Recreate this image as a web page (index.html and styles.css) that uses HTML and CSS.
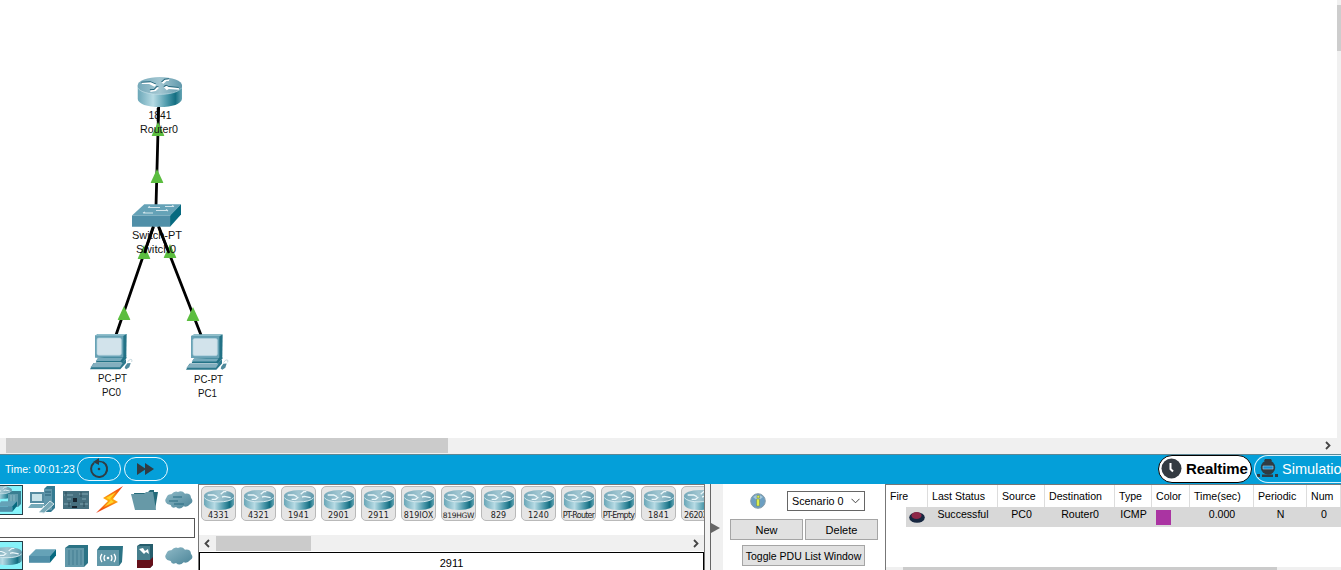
FILE: index.html
```html
<!DOCTYPE html>
<html lang="en">
<head>
<meta charset="utf-8">
<title>Network simulator</title>
<link rel="stylesheet" href="styles.css">
</head>
<body>
<svg class="defs" width="0" height="0">
  <defs>
    <linearGradient id="side"><stop offset="0" stop-color="#6aa6b7"/><stop offset=".35" stop-color="#b7dbe4"/><stop offset=".65" stop-color="#4f9bad"/><stop offset=".85" stop-color="#146f82"/><stop offset="1" stop-color="#68a6b5"/></linearGradient>
    <linearGradient id="lid"><stop offset="0" stop-color="#74a8b9"/><stop offset=".5" stop-color="#a2c6d1"/><stop offset="1" stop-color="#6098ab"/></linearGradient>
    <linearGradient id="face" x2="1" y2="1"><stop offset="0" stop-color="#8fbac7"/><stop offset="1" stop-color="#4b8498"/></linearGradient>
    <linearGradient id="bolt" x2="0" y2="1"><stop offset="0" stop-color="#f02d12"/><stop offset=".5" stop-color="#ffae0c"/><stop offset="1" stop-color="#ed2d10"/></linearGradient>
  </defs>
  <symbol id="router" viewBox="0 0 134 90" preserveAspectRatio="none">
    <path d="M0 25V65C3 81 29 90 67 90S131 81 134 65V25Z" fill="url(#side)"/>
    <ellipse cx="67" cy="26" rx="67" ry="26" fill="url(#lid)"/>
    <path d="M1 33C14 57 115 60 133 32" fill="none" stroke="#c6e0e7" stroke-width="2"/>
    <g fill="#1c6178" transform="translate(-1 -3)"><path d="M13 17 40 16 57 23 51 29 35 21 13 21ZM72 17 82 8 96 7 94 12 87 12 78 20ZM38 40 50 39 59 30 65 32 55 42 39 45ZM79 31 87 26 94 30 124 33 125 38 94 36 88 40Z"/></g>
    <path d="M13 17 40 16 57 23 51 29 35 21 13 21ZM72 17 82 8 96 7 94 12 87 12 78 20ZM38 40 50 39 59 30 65 32 55 42 39 45ZM79 31 87 26 94 30 124 33 125 38 94 36 88 40Z" fill="#fff"/>
  </symbol>
  <symbol id="mini" viewBox="0 0 90 60" preserveAspectRatio="none">
    <path d="M0 17V43C3 54 20 60 45 60S87 54 90 43V17Z" fill="url(#side)"/>
    <ellipse cx="45" cy="18" rx="45" ry="18" fill="url(#lid)"/>
    <path d="M1 23C12 40 78 40 89 23" fill="none" stroke="#d5e9ee" stroke-width="3"/>
    <path d="M11 15H29L39 20M50 13 59 5H67M23 28H35L43 21M54 21 61 19 80 23" fill="none" stroke="#eaf6f9" stroke-width="4"/>
  </symbol>
  <symbol id="pc" viewBox="0 0 132 110" preserveAspectRatio="none">
    <path d="M15 9 24 3H110L109 67 98 79 15 72Z" fill="#237286"/>
    <path d="M15 7 24 3H110L99 9H15Z" fill="#8fbfcc"/>
    <path d="M15 8H100V73H15Z" fill="#68a2b5"/><rect x="21" y="15" width="73" height="51" rx="5" fill="#d2e3eb" stroke="#b2d4e0" stroke-width="2"/>
    <path d="M24 74H98L108 65 110 74 97 88H17Z" fill="#237286"/><path d="M24 74H98L91 83H17Z" fill="#75aabc"/>
    <path d="M10 90H92L108 77V89L91 108H0Z" fill="#2c788c"/><path d="M13 89H98L90 102H1Z" fill="#83afbf"/>
    <path d="M106 98 112 90 122 89 118 102 109 108 104 104Z" fill="#4f899c"/><path d="M113 86 118 80Q128 75 125 86" fill="none" stroke="#abc4ce" stroke-width="2"/>
  </symbol>
  <symbol id="cloud" viewBox="0 0 84 60" preserveAspectRatio="none"><path d="M7 42Q-4 33 4 23Q8 12 19 13Q29 1 39 6Q51 0 60 11Q77 9 78 23Q88 35 75 43Q67 53 56 49Q44 61 33 51Q20 57 17 45Z" fill="url(#face)"/></symbol>
  <symbol id="switch" viewBox="0 0 148 70" preserveAspectRatio="none"><path d="M0 35 37 1H148L115 35Z" fill="#65a2b7"/><path d="M0 35H115V69H0Z" fill="#508fa8"/><path d="M115 35 148 1V32L115 69Z" fill="#076a80"/></symbol>
  <symbol id="tri" viewBox="0 0 13 14"><path d="M6.5 0 13 14H0Z" fill="#5bbd3f"/></symbol>
</svg>

<main class="app">
  <section class="workspace">
    <svg class="topology" width="1337" height="438" viewBox="0 0 1337 438">
      <g stroke="#000" stroke-width="2.8"><path d="M158.700 105 156 206M153.500 226 116 335M158.500 226 201 335"/></g>
      <use href="#tri" x="151.500" y="122" width="13" height="14"/><use href="#tri" x="150.500" y="169" width="13" height="14"/>
      <use href="#tri" x="137.500" y="245" width="13" height="14"/><use href="#tri" x="163.500" y="244" width="13" height="14"/>
      <use href="#tri" x="117.500" y="306" width="13" height="14"/><use href="#tri" x="186.500" y="307" width="13" height="14"/>
      <use href="#router" x="137.500" y="77" width="44.600" height="30"/>
      <use href="#switch" x="132" y="204" width="49" height="23"/>
      <g fill="none" stroke="#d2e5ec" stroke-width="1.200"><path d="M148 207.500 150 206.500M148 207.500H160M165 206.500H174M172 205.500 174 206.500M143 213H153M143 213 145 212M156 210.500H167M166 209.500 168 211"/></g>
      <use href="#pc" x="90" y="333" width="44" height="37"/><use href="#pc" x="186" y="333.500" width="44" height="37"/>
      <g class="labels">
        <text x="160" y="119" textLength="23" lengthAdjust="spacingAndGlyphs">1841</text><text x="159" y="133" textLength="38" lengthAdjust="spacingAndGlyphs">Router0</text>
        <text x="157" y="239" textLength="50" lengthAdjust="spacingAndGlyphs">Switch-PT</text><text x="156" y="253" textLength="40" lengthAdjust="spacingAndGlyphs">Switch0</text>
        <text x="112.500" y="382" textLength="29" lengthAdjust="spacingAndGlyphs">PC-PT</text><text x="111.500" y="396" textLength="19" lengthAdjust="spacingAndGlyphs">PC0</text>
        <text x="208.500" y="383" textLength="29" lengthAdjust="spacingAndGlyphs">PC-PT</text><text x="207.500" y="397" textLength="19" lengthAdjust="spacingAndGlyphs">PC1</text>
      </g>
      <path d="M158 108V121M153.500 227 144.500 253M158.500 227 169 253" stroke="#000" stroke-width="2.500"/>
    </svg>
    <div class="vscroll"><div class="vthumb"></div></div>
  </section>
  <div class="hscroll"><div class="hthumb"></div><svg width="8" height="9" viewBox="0 0 8 9"><path d="M2 1 5.500 4.500 2 8" class="chev"/></svg></div>

  <header class="timebar">
    <span class="clock">Time: 00:01:23</span>
    <span class="pill"><svg width="22" height="22" viewBox="0 0 22 22"><path d="M6 4.800A8 8 0 1 0 15 4" fill="none" stroke="#303c43" stroke-width="2"/><path d="M5 4 11 0V7Z" fill="#303c43"/><path d="M10 3.500Q14 3 16 5" fill="none" stroke="#303c43" stroke-width="1.500"/><circle cx="11" cy="11" r="1.300" fill="#303c43"/></svg></span>
    <span class="pill"><svg width="18" height="12" viewBox="0 0 18 12"><path d="M0 0 9 6 0 12ZM8 0 17 6 8 12Z" fill="#303c43"/></svg></span>
    <span class="realtime"><svg width="21" height="21" viewBox="0 0 21 21"><circle cx="10.500" cy="10.500" r="10" fill="#343b42"/><path d="M9.500 5V11L12 13.500" fill="none" stroke="#fff" stroke-width="2"/></svg><b>Realtime</b></span>
    <span class="simulation"><svg width="21" height="19" viewBox="0 0 21 19"><path d="M7 2 8 0H14L15 2Z" fill="#303c43"/><circle cx="11" cy="8.500" r="7.200" fill="#303c43"/><path d="M6 7H16V10H6Z" fill="#168dd0" stroke="#8dbbd4" stroke-width=".7"/><path d="M0 15H3V18H0ZM5 15.500H16V18H5ZM18 15H21V18H18Z" fill="#303c43"/></svg><span>Simulatio</span></span>
  </header>

  <section class="bottom">
    <aside class="palette">
      <div class="icons">
        <div class="cell chosen"><svg width="23" height="30" viewBox="0 0 23 30"><use href="#mini" x="-9" y="1" width="21" height="13"/><path d="M8 9 12 6H21V19L18 22H8Z" fill="#397f92"/><path d="M8 9H18V22H8Z" fill="#609bac"/><path d="M11 10V21M14 10V21" stroke="#8bbac7"/><use href="#switch" x="-4" y="16" width="21" height="11"/></svg></div>
        <div class="cell"><svg width="28" height="28" viewBox="0 0 28 28"><path d="M16 3 19 0H27V22L23 26H16Z" fill="#347a91"/><path d="M16 3H24V24H16Z" fill="#6097ab"/><path d="M17 6H23M17 9H23" stroke="#265f75"/><path d="M2 6H16V17H2Z" fill="#558ba0"/><path d="M4 8H14V15H4Z" fill="#c9e3e9"/><path d="M3 18H17L14 22H0Z" fill="#75a9b8"/><path d="M11 26 22 15 26 18 16 27Z" fill="#79a9b7" stroke="#d2e2e7"/></svg></div>
        <div class="cell"><svg width="26" height="20" viewBox="0 0 26 20"><path d="M0 1H26V19H0Z" fill="#47707f"/><path d="M1 5H10M1 14H8M16 4H25M17 14H25M4 9H8M19 9H23" stroke="#83a8b5"/><path d="M10 8H14V12H10ZM9 16H14V18H9Z" fill="#17242e"/><path d="M3 2V6M6 12V17M18 2V7M21 12V17" stroke="#2a4a58"/></svg></div>
        <div class="cell"><svg width="28" height="28" viewBox="0 0 28 28"><path d="M27 0 7 12 12 15 0 27 22 16 17 13Z" fill="url(#bolt)"/><path d="M20 6 10 12 15 14 8 21 18 16 14 13Z" fill="#ffd72a"/></svg></div>
        <div class="cell"><svg width="28" height="22" viewBox="0 0 28 22"><path d="M3 4H16L19 1H23V3H27L24 21H5Z" fill="#246a79"/><path d="M0 5H13L15 3H22L25 21H4Z" fill="#6799a7"/></svg></div>
        <div class="cell"><svg width="28" height="20" viewBox="0 0 28 20"><use href="#cloud" width="28" height="20"/><path d="M8 7H17M4 11H13M9 14H19" stroke="#286b80" stroke-width="1.200"/></svg></div>
      </div>
      <div class="search"></div>
      <div class="icons second">
        <div class="cell chosen"><svg width="23" height="28" viewBox="0 0 23 28"><use href="#mini" x="-8" y="5" width="30" height="18"/></svg></div>
        <div class="cell"><svg width="27" height="14" viewBox="0 0 27 14"><use href="#switch" width="27" height="14"/></svg></div>
        <div class="cell"><svg width="23" height="22" viewBox="0 0 23 22"><path d="M0 3 4 0H23V18L19 22H0Z" fill="#2b7385"/><path d="M0 3H19V22H0Z" fill="#6298a9"/><path d="M4 5V20M8 5V20M12 5V20M16 5V20" stroke="#427d91"/></svg></div>
        <div class="cell"><svg width="26" height="20" viewBox="0 0 26 20"><path d="M0 4 3 0H26L25 16 22 20H0Z" fill="#2b7385"/><path d="M0 4H22V20H0Z" fill="#6298a9"/><path d="M5 8Q2 12 5 16M8 9Q6 12 8 15M17 8Q20 12 17 16M14 9Q16 12 14 15" fill="none" stroke="#fff" stroke-width="1.300"/><circle cx="11" cy="12" r="1.300" fill="#fff"/></svg></div>
        <div class="cell"><svg width="16" height="24" viewBox="0 0 16 24"><path d="M0 2 3 0H16V21L13 24H0Z" fill="#255d6c"/><path d="M0 2H13V16H0Z" fill="#467e8c"/><path d="M0 16H13L16 13V21L13 24H0Z" fill="#65101a"/><path d="M2 5 6 4 8 7 11 5 12 10 9 8 7 10Z" fill="#fff"/></svg></div>
        <div class="cell"><svg width="28" height="20" viewBox="0 0 28 20"><use href="#cloud" width="28" height="20"/></svg></div>
      </div>
    </aside>

    <section class="devices">
      <div class="tiles">
        <div class="tile"><svg><use href="#mini"/></svg><span>4331</span></div>
        <div class="tile"><svg><use href="#mini"/></svg><span>4321</span></div>
        <div class="tile"><svg><use href="#mini"/></svg><span>1941</span></div>
        <div class="tile"><svg><use href="#mini"/></svg><span>2901</span></div>
        <div class="tile"><svg><use href="#mini"/></svg><span>2911</span></div>
        <div class="tile"><svg><use href="#mini"/></svg><span>819IOX</span></div>
        <div class="tile"><svg><use href="#mini"/></svg><span class="snug">819HGW</span></div>
        <div class="tile"><svg><use href="#mini"/></svg><span>829</span></div>
        <div class="tile"><svg><use href="#mini"/></svg><span>1240</span></div>
        <div class="tile"><svg><use href="#mini"/></svg><span class="tight">PT-Router</span></div>
        <div class="tile"><svg><use href="#mini"/></svg><span class="tight">PT-Empty</span></div>
        <div class="tile"><svg><use href="#mini"/></svg><span>1841</span></div>
        <div class="tile"><svg><use href="#mini"/></svg><span class="left">2620X</span></div>
      </div>
      <div class="dscroll"><svg width="8" height="9" viewBox="0 0 8 9"><path d="M6 1 2.500 4.500 6 8" class="chev"/></svg><div class="dthumb"></div><svg width="8" height="9" viewBox="0 0 8 9"><path d="M2 1 5.500 4.500 2 8" class="chev"/></svg></div>
      <div class="model">2911</div>
    </section>

    <div class="splitter"><svg width="9" height="10" viewBox="0 0 9 10"><path d="M0 0 9 5 0 10Z" fill="#666"/></svg></div>

    <section class="scenario">
      <div class="pick"><svg width="16" height="16" viewBox="0 0 16 16"><circle cx="8" cy="8" r="7.300" fill="#6c9fc2" stroke="#879ca8"/><path d="M3 4Q8 0 13 4L8 8Z" fill="#a7c7d9"/><path d="M6.500 6H9.500V13H6.500ZM7 2.500H9.500V5H7Z" fill="#dded4c" stroke="#698449" stroke-width=".5"/></svg>
        <div class="select"><span>Scenario 0</span><svg width="9" height="6" viewBox="0 0 9 6"><path d="M.5 .8 4.500 4.800 8.500 .8" fill="none" stroke="#444"/></svg></div></div>
      <div class="buttons"><div class="btn">New</div><div class="btn">Delete</div></div>
      <div class="btn toggle">Toggle PDU List Window</div>
    </section>

    <section class="pdu">
      <div class="head"><span>Fire</span><span>Last Status</span><span>Source</span><span>Destination</span><span>Type</span><span>Color</span><span>Time(sec)</span><span>Periodic</span><span>Num</span></div>
      <div class="row"><span class="fire"><svg width="16" height="12" viewBox="0 0 16 12"><ellipse cx="8" cy="6.500" rx="7.800" ry="5.300" fill="#172740"/><ellipse cx="7.500" cy="4.500" rx="5" ry="3.600" fill="#8d2848"/></svg></span><span>Successful</span><span>PC0</span><span>Router0</span><span>ICMP</span><span class="color"><i></i></span><span>0.000</span><span>N</span><span>0</span></div>
      <div class="pscroll"><div></div></div>
    </section>
  </section>
</main>
</body>
</html>
```
FILE: styles.css
```css
* { box-sizing: border-box; }
body { margin: 0; overflow: hidden; background: #fff; color: #000; font: 11px "Liberation Sans", Arial, sans-serif; }
svg { display: block; flex: none; }
.defs { position: absolute; }
.app { display: flex; flex-direction: column; width: 1341px; height: 570px; overflow: hidden; }
.chev { fill: none; stroke: #444; stroke-width: 1.8; }

.workspace { display: flex; height: 438px; }
.labels { text-anchor: middle; font-size: 11px; fill: #111; }
.vscroll { width: 4px; padding-top: 5px; background: #f0f0f0; }
.vthumb { height: 46px; background: #cdcdcd; }
.hscroll { display: flex; align-items: center; justify-content: space-between; height: 16px; padding: 0 9px 1px 6px; background: #f0f0f0; flex: none; }
.hthumb { width: 442px; height: 15px; background: #cbcbcb; }

.timebar { display: flex; align-items: center; height: 30px; flex: none; padding: 0 0 2px 5px; background: #049fd9; border-top: 1px solid #5d8795; color: #fff; }
.clock { width: 72px; white-space: nowrap; font-size: 10.5px; letter-spacing: .02px; }
.pill { display: flex; align-items: center; justify-content: center; width: 44px; height: 24px; margin-right: 3px; border: 1px solid #e9f8ff; border-radius: 12px; }
.realtime { display: flex; align-items: center; gap: 4px; width: 94px; height: 28px; margin-left: auto; padding-left: 2px; border: 1px solid #000; border-radius: 14px; background: #fff; color: #000; font-size: 15px; letter-spacing: -.1px; }
.simulation { display: flex; align-items: center; gap: 4px; width: 87px; height: 28px; margin-left: 2px; padding-left: 2px; border: 1px solid #d8f4ff; border-right: 0; border-radius: 14px 0 0 14px; overflow: hidden; font-size: 14.5px; }

.bottom { display: flex; height: 86px; }
.palette { width: 198px; padding-top: 1px; flex: none; }
.icons { display: flex; height: 30px; }
.cell { display: flex; width: 34.2px; align-items: center; justify-content: center; }
.chosen { width: 23px; margin-right: 2px; overflow: hidden; border: 1px solid #273f49; border-left: 0; background: #86f3fa; }
.search { width: 195px; height: 20px; margin: 3px 0; border: 1px solid #555; border-left: 0; }
.second { height: 29px; }

.devices { width: 507px; flex: none; display: flex; flex-direction: column; border-left: 1px solid #777; border-right: 1px solid #777; border-top: 1px solid #777; }
.tiles { display: flex; gap: 5px; height: 52px; padding: 1px 0 0 2px; overflow: hidden; }
.tile { width: 35px; height: 35px; flex: none; padding-top: 3px; border: 1px solid #b9b9b9; border-radius: 5px; background: #e5e5e5; overflow: hidden; text-align: center; }
.tile svg { width: 30px; height: 20px; margin: 0 auto 1px; }
.tile span { display: block; height: 10px; margin: 0 -4px; font: 8px/10px "DejaVu Sans", sans-serif; color: #222; letter-spacing: .1px; white-space: nowrap; }
.tile .tight { letter-spacing: -.75px; }
.tile .snug { font-size: 7.5px; letter-spacing: -.3px; }
.tile .left { text-align: left; padding-left: 6px; letter-spacing: -.4px; }
.dscroll { display: flex; align-items: center; height: 16px; padding: 0 4px; background: #f0f0f0; }
.dthumb { width: 95px; height: 15px; margin: 0 auto 0 5px; background: #cbcbcb; }
.model { flex: 1; margin-top: 1px; padding-top: 4px; border: 1px solid #000; border-bottom: 0; text-align: center; line-height: 13px; }

.splitter { display: flex; align-items: center; width: 21px; flex: none; border-left: 5px solid #f3f3f3; background: linear-gradient(90deg, #666 1px, #f0f0f0 1px 13px, #fff 13px); }
.splitter svg { margin: 2px 0 0 1px; }
.scenario { width: 159px; flex: none; padding: 7px 7px 0 4px; }
.pick { display: flex; align-items: center; padding-left: 20px; gap: 21px; }
.select { display: flex; align-items: center; justify-content: space-between; width: 78px; height: 20px; padding: 0 4px; border: 1px solid #666; white-space: nowrap; font-size: 10.8px; }
.buttons { display: flex; gap: 2px; margin: 8px 0 5px; }
.btn { width: 73px; height: 21px; display: flex; align-items: center; justify-content: center; border: 1px solid #a5a5a5; background: #e1e1e1; white-space: nowrap; }
.toggle { width: 123px; margin-left: 12px; font-size: 10.5px; }

.pdu { flex: 1; display: flex; flex-direction: column; border-left: 1px solid #777; border-top: 1px solid #777; overflow: hidden; }
.head, .row { display: grid; grid-template-columns: 42px 70px 47px 70px 37px 38px 64px 53px 34px; }
.head { height: 22px; line-height: 22px; font-size: 10.6px; }
.head span { padding-left: 4px; border-right: 1px solid #ddd; white-space: nowrap; }
.row { height: 20px; background: linear-gradient(90deg, #fff 20px, #d8d8d8 20px); line-height: 15px; text-align: center; font-size: 10.6px; }
.fire svg { margin: 4px 0 0 23px; }
.color { padding: 3px 0 0 4px; }
.color i { display: block; width: 15px; height: 15px; background: #aa34a2; }
.pscroll { height: 3px; margin-top: auto; padding-left: 17px; background: #f0f0f0; }
.pscroll div { width: 374px; height: 3px; background: #cbcbcb; }
```
